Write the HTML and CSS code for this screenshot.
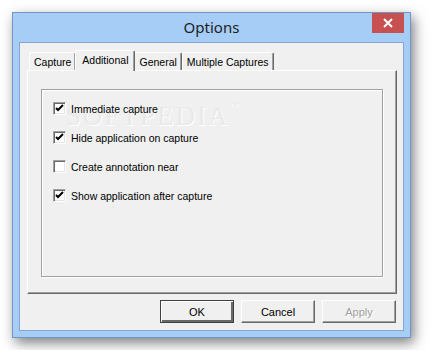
FILE: index.html
```html
<!DOCTYPE html>
<html lang="en">
<head>
<meta charset="UTF-8">
<meta name="viewport" content="width=device-width, initial-scale=1.0">
<title>Options</title>
<link rel="stylesheet" href="styles.css">
</head>
<body>
    <div class="window">
        <div class="titlebar">
            <span></span>
            <span class="title">Options</span>
            <button class="close" type="button" aria-label="Close">
                <svg width="10" height="10" viewBox="0 0 10 10">
                    <path d="M1 1 L9 9 M9 1 L1 9" stroke="#fff" stroke-width="2"/>
                </svg>
            </button>
        </div>

        <div class="client">
            <div class="tabs">
                <div class="tabstrip">
                    <div class="tab">Capture</div>
                    <div class="tab selected">Additional</div>
                    <div class="tab">General</div>
                    <div class="tab">Multiple Captures</div>
                </div>
                <div class="panel">
                    <div class="group">
                        <div class="watermark">SOFTPEDIA<sup>™</sup></div>
                        <label class="row">
                            <span class="box checked"></span>
                            Immediate capture
                        </label>
                        <label class="row">
                            <span class="box checked"></span>
                            Hide application on capture
                        </label>
                        <label class="row">
                            <span class="box"></span>
                            Create annotation near
                        </label>
                        <label class="row">
                            <span class="box checked"></span>
                            Show application after capture
                        </label>
                    </div>
                </div>
            </div>

            <div class="buttons">
                <button class="btn default" type="button">OK</button>
                <button class="btn" type="button">Cancel</button>
                <button class="btn" type="button" disabled>Apply</button>
            </div>
        </div>
    </div>
</body>
</html>
```

FILE: styles.css
```css
body {
    margin: 0;
    padding: 12px;
    background-color: #fff;
    font-family: "Liberation Sans", Arial, sans-serif;
    font-size: 10.5px;
    color: #000;
}

.window {
    width: 399px;
    height: 326px;
    box-sizing: border-box;
    background-color: #a5cdf6;
    border: 1px solid #7195c8;
    padding: 0 6px 6px 6px;
    box-shadow: 3px 5px 12px rgba(0, 0, 0, 0.5);
}

/* title bar */
.titlebar {
    height: 29px;
    display: grid;
    grid-template-columns: 1fr auto 1fr;
    margin: 0 -6px;
}

.title {
    font-family: "Noto Sans", "Open Sans", sans-serif;
    font-size: 15px;
    line-height: 29px;
    color: #1e1e1e;
}

.close {
    justify-self: end;
    align-self: start;
    width: 32px;
    height: 20px;
    margin-right: 6px;
    padding: 0;
    border: none;
    background-color: #c75050;
    display: flex;
    align-items: center;
    justify-content: center;
}

/* client area */
.client {
    height: 289px;
    box-sizing: border-box;
    background-color: #f0f0f0;
    border: 1px solid #86a6d2;
    padding: 7px 6px 7px 7px;
}

.tabstrip {
    height: 20px;
    display: flex;
    align-items: flex-end;
    padding-left: 2px;
    position: relative;
    z-index: 1;
}

.tab {
    height: 18px;
    box-sizing: border-box;
    padding: 2px 4px 0 4px;
    background-color: #f0f0f0;
    border-top: 1px solid #fff;
    border-left: 1px solid #fff;
    border-right: 1px solid #696969;
    box-shadow: inset -1px 0 #a0a0a0;
    border-radius: 2px 2px 0 0;
    line-height: 14px;
}

.tab.selected {
    height: 21px;
    margin: 0 -1px -1px -1px;
    padding: 2px 6px 0 6px;
    position: relative;
    z-index: 2;
}

.panel {
    height: 224px;
    box-sizing: border-box;
    border-top: 1px solid #fff;
    border-left: 1px solid #fff;
    border-right: 1px solid #696969;
    border-bottom: 1px solid #696969;
    box-shadow: inset -1px -1px #a0a0a0;
    padding: 18px 13px 16px 13px;
}

.group {
    height: 100%;
    box-sizing: border-box;
    border: 1px solid #a0a0a0;
    box-shadow: 1px 1px 0 #fff, inset 1px 1px 0 #fff;
    padding: 10px 11px;
    display: flex;
    flex-direction: column;
    gap: 12px;
    position: relative;
}

.watermark {
    position: absolute;
    left: 24px;
    top: 11px;
    font-family: "Liberation Serif", serif;
    font-size: 27px;
    letter-spacing: 2px;
    color: #e9e9e9;
    text-shadow: 1px 1px 0 #fff;
    pointer-events: none;
}

.watermark sup {
    font-size: 9px;
    vertical-align: top;
    letter-spacing: 0;
}

.row {
    height: 17px;
    display: flex;
    align-items: center;
    gap: 5px;
    position: relative;
}

.box {
    width: 13px;
    height: 13px;
    box-sizing: border-box;
    background-color: #fff;
    border: 1px solid;
    border-color: #a0a0a0 #fff #fff #a0a0a0;
    box-shadow: inset 1px 1px #696969, inset -1px -1px #e3e3e3;
}

.box.checked {
    background-image: url("data:image/svg+xml,%3Csvg xmlns='http://www.w3.org/2000/svg' width='11' height='11'%3E%3Cpath d='M2 5 L4 7 L9 2' fill='none' stroke='%23000' stroke-width='2'/%3E%3C/svg%3E");
    background-repeat: no-repeat;
    background-position: 0 0;
}

/* dialog buttons */
.buttons {
    display: flex;
    justify-content: flex-end;
    gap: 7px;
    margin-top: 6px;
    padding-right: 1px;
}

.btn {
    width: 74px;
    height: 23px;
    box-sizing: border-box;
    padding: 0;
    font-family: "Liberation Sans", Arial, sans-serif;
    font-size: 11px;
    color: #000;
    background-color: #f0f0f0;
    border: 1px solid;
    border-color: #fff #696969 #696969 #fff;
    box-shadow: inset -1px -1px #a0a0a0;
}

.btn.default {
    border-color: #404040;
    box-shadow: inset 1px 1px #fff, inset -2px -2px #696969;
}

.btn:disabled {
    color: #a0a0a0;
    text-shadow: 1px 1px 0 #fff;
}
```
